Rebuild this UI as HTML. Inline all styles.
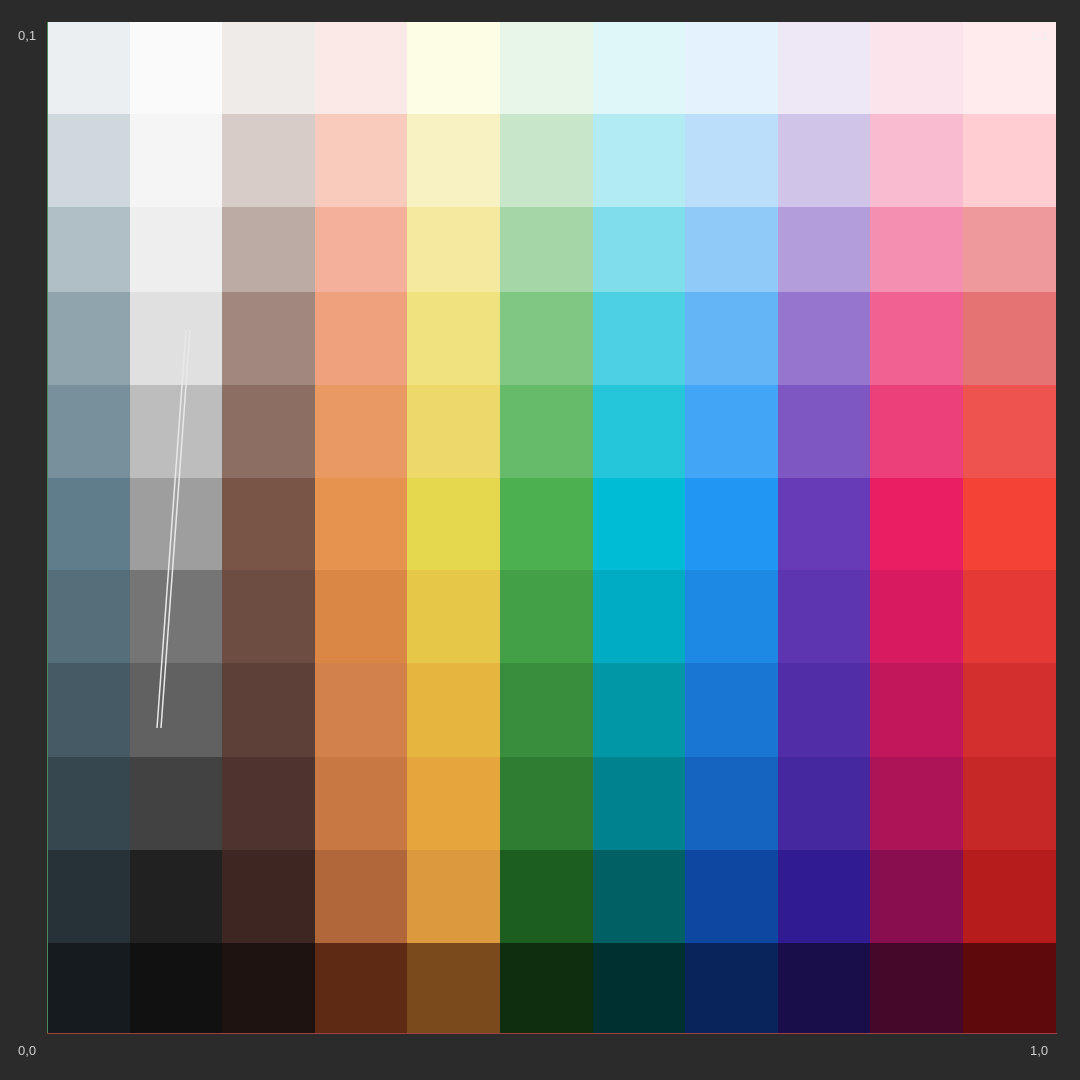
<!DOCTYPE html>
<html><head><meta charset="utf-8"><style>
html,body{margin:0;padding:0;background:#2b2b2b;width:1080px;height:1080px;overflow:hidden;font-family:"Liberation Sans",sans-serif}
#g{position:absolute;left:48px;top:22px;width:1008px;height:1011px;display:grid;
grid-template-columns:82px 92px 93px 92px 93px 93px 92px 93px 92px 93px 93px;
grid-template-rows:92px 93px 85px 93px 93px 92px 93px 94px 93px 93px 90px}
#g div{}
.l{position:absolute;color:#d0d0d0;font-size:13px}
#ax{position:absolute;left:47px;top:22px;width:1px;height:1012px;background:#4a8a5a}
#bx{position:absolute;left:47px;top:1033px;width:1010px;height:1px;background:#a04040}
</style></head><body>
<div id="g"></div>
<div id="ax"></div><div id="bx"></div>
<div class="l" style="left:18px;top:28px">0,1</div>
<div class="l" style="left:18px;top:1043px">0,0</div>
<div class="l" style="left:1030px;top:1043px">1,0</div>
<div class="l" style="left:1030px;top:28px;color:#f0f0f0">1,1</div>
<script>
var cols=[
["ECEFF1","CFD8DC","B0BEC5","90A4AE","78909C","607D8B","546E7A","455A64","37474F","263238","151B1F"],
["FAFAFA","F5F5F5","EEEEEE","E0E0E0","BDBDBD","9E9E9E","757575","616161","424242","212121","111111"],
["EFEBE9","D7CCC8","BCAAA4","A1887F","8D6E63","795548","6D4C41","5D4037","4E342E","3E2723","1F1311"],
["FBE9E7","F8CBBC","F4B09A","EFA07D","E89A62","E69350","DA8745","D3814A","C87842","B0673A","5E2A14"],
["FDFCE5","F8F2C3","F5E89F","F0E27F","EDD96A","E6D84E","E6C748","E5B53F","E5A63D","DA9A3D","7A4A1C"],
["E8F5E9","C8E6C9","A5D6A7","81C784","66BB6A","4CAF50","43A047","388E3C","2E7D32","1B5E20","0F2E10"],
["E0F7FA","B2EBF2","80DEEA","4DD0E1","26C6DA","00BCD4","00ACC1","0097A7","00838F","006064","003030"],
["E3F2FD","BBDEFB","90CAF9","64B5F6","42A5F5","2196F3","1E88E5","1976D2","1565C0","0D47A1","08245A"],
["EDE7F6","D1C4E9","B39DDB","9575CD","7E57C2","673AB7","5E35B1","512DA8","4527A0","311B92","1A0E4A"],
["FCE4EC","F8BBD0","F48FB1","F06292","EC407A","E91E63","D81B60","C2185B","AD1457","880E4F","45082A"],
["FFEBEE","FFCDD2","EF9A9A","E57373","EF5350","F44336","E53935","D32F2F","C62828","B71C1C","5E0A0A"]];
var g=document.getElementById('g'),h='';
for(var r=0;r<11;r++)for(var c=0;c<11;c++)h+='<div style="background:#'+cols[c][r]+'"></div>';
g.innerHTML=h;
</script>
<svg style="position:absolute;left:0;top:0" width="1080" height="1080"><path d="M186 330 L157 728 M190 330 L161 728" stroke="#e8e8e8" stroke-width="1.5" fill="none"/></svg>
</body></html>
